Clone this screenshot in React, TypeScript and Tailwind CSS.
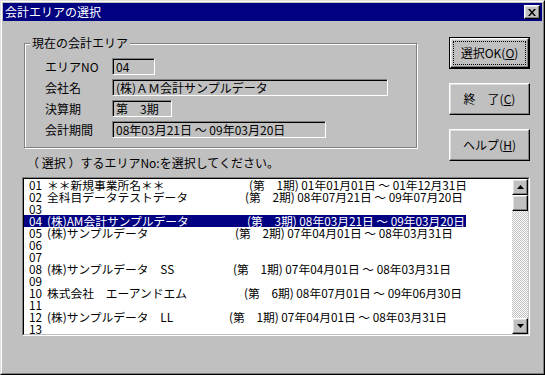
import React from 'react';

type Row = { no: string; name?: string; w?: string; period?: string; sel?: boolean };

const rows: Row[] = [
  { no: '01', name: '＊＊新規事業所名＊＊', w: 'w-[202px]', period: '(第　1期) 01年01月01日 ～ 01年12月31日' },
  { no: '02', name: '全科目データテストデータ', w: 'w-[198px]', period: '(第　2期) 08年07月21日 ～ 09年07月20日' },
  { no: '03' },
  { no: '04', name: '(株)AM会計サンプルデータ', w: 'w-[200px]', period: '(第　3期) 08年03月21日 ～ 09年03月20日', sel: true },
  { no: '05', name: '(株)サンプルデータ', w: 'w-[188px]', period: '(第　2期) 07年04月01日 ～ 08年03月31日' },
  { no: '06' },
  { no: '07' },
  { no: '08', name: '(株)サンプルデータ　SS', w: 'w-[186px]', period: '(第　1期) 07年04月01日 ～ 08年03月31日' },
  { no: '09' },
  { no: '10', name: '株式会社　エーアンドエム', w: 'w-[197px]', period: '(第　6期) 08年07月01日 ～ 09年06月30日' },
  { no: '11' },
  { no: '12', name: '(株)サンプルデータ　LL', w: 'w-[182px]', period: '(第　1期) 07年04月01日 ～ 08年03月31日' },
  { no: '13' },
];

// raised 3d face used by every push button
const face =
  'border border-t-white border-l-white border-r-black border-b-black bg-[#c0c0c0] shadow-[inset_-1px_-1px_0_#808080,inset_1px_1px_0_#dfdfdf]';

const sunken =
  'border border-t-[#808080] border-l-[#808080] border-r-white border-b-white shadow-[inset_1px_1px_0_#000]';

const Field = ({ w, children }: { w: string; children?: React.ReactNode }) => (
  <div className={`${w} h-[17px] ${sunken} flex items-center px-[3px] whitespace-nowrap`}>{children}</div>
);

const Arrow = ({ down }: { down?: boolean }) => (
  <svg width="7" height="4" viewBox="0 0 7 4">
    <path d={down ? 'M0 0h7L3.5 4z' : 'M3.5 0L7 4H0z'} fill="#000" />
  </svg>
);

export default function App() {
  return (
    <div className="w-[545px] h-[375px] font-['Noto_Sans_CJK_JP',sans-serif] text-[12px] leading-[12px] text-black border border-t-[#dfdfdf] border-l-[#dfdfdf] border-r-black border-b-black">
      <div className="h-full flex flex-col p-px bg-[#c0c0c0] border border-t-white border-l-white border-r-[#808080] border-b-[#808080]">
        {/* title bar */}
        <div className="h-[18px] bg-[#000080] flex items-center justify-between pl-[2px] pr-[2px]">
          <span className="text-white">会計エリアの選択</span>
          <div className={`w-[16px] h-[14px] ${face} flex items-center justify-center`}>
            <svg width="8" height="7" viewBox="0 0 8 7">
              <path d="M0 0h2l2 2.4L6 0h2L5 3.5 8 7H6L4 4.6 2 7H0l3-3.5z" fill="#000" />
            </svg>
          </div>
        </div>

        {/* client area */}
        <div className="flex-1 flex flex-col">
          <div className="flex pl-[21px] pt-[16px]">
            <div className="flex flex-col">
              <fieldset className="w-[393px] border border-[#808080] shadow-[1px_1px_0_#fff,inset_1px_1px_0_#fff]">
                <legend className="ml-[5px] px-[2px] bg-[#c0c0c0] leading-[12px]">現在の会計エリア</legend>
                <div className="grid grid-cols-[67px_1fr] gap-y-[4px] items-center pl-[20px] pt-[9px] pb-[9px]">
                  <span>エリアNO</span>
                  <Field w="w-[43px]">04</Field>
                  <span>会社名</span>
                  <Field w="w-[276px]">(株)ＡＭ会計サンプルデータ</Field>
                  <span>決算期</span>
                  <Field w="w-[60px]">第　3期</Field>
                  <span>会計期間</span>
                  <Field w="w-[214px]">08年03月21日 ～ 09年03月20日</Field>
                </div>
              </fieldset>
              <p className="mt-[9px] pl-[3px]">（ 選択 ）するエリアNo:を選択してください。</p>
            </div>

            <div className="ml-auto mr-[12px] flex flex-col gap-[14px]">
              <div className="w-[81px] h-[32px] border border-black flex">
                <div className={`flex-1 flex ${face}`}>
                  <div className="flex-1 m-[2px] border border-dotted border-black flex items-center justify-center">
                    選択OK(<u>O</u>)
                  </div>
                </div>
              </div>
              <div className={`w-[81px] h-[32px] ${face} flex items-center justify-center`}>
                終　了(<u>C</u>)
              </div>
              <div className={`w-[81px] h-[32px] ${face} flex items-center justify-center`}>
                ヘルプ(<u>H</u>)
              </div>
            </div>
          </div>

          {/* list box */}
          <div className="ml-[19px] mt-[8px] w-[508px] h-[159px] border border-t-[#808080] border-l-[#808080] border-r-white border-b-white">
            <div className="h-full flex bg-white border border-t-black border-l-black border-r-[#c0c0c0] border-b-[#c0c0c0]">
              <div className="flex-1 overflow-hidden text-[11.75px] leading-[12px]">
                {rows.map((r) => (
                  <div key={r.no} className="h-[12px] flex">
                    <div
                      className={`flex items-center pl-[5px] pr-[1px] whitespace-nowrap ${
                        r.sel ? 'bg-[#000080] text-white' : ''
                      }`}
                    >
                      <span className="w-[18px]">{r.no}</span>
                      {r.name && <span className={r.w}>{r.name}</span>}
                      {r.period && <span>{r.period}</span>}
                    </div>
                  </div>
                ))}
              </div>
              <div className="w-[16px] flex flex-col bg-[repeating-conic-gradient(#c0c0c0_0_25%,#fff_0_50%)] bg-[length:2px_2px]">
                <div className={`h-[16px] ${face} flex items-center justify-center`}>
                  <Arrow />
                </div>
                <div className={`h-[16px] ${face}`} />
                <div className="flex-1" />
                <div className={`h-[16px] ${face} flex items-center justify-center`}>
                  <Arrow down />
                </div>
              </div>
            </div>
          </div>
        </div>
      </div>
    </div>
  );
}
